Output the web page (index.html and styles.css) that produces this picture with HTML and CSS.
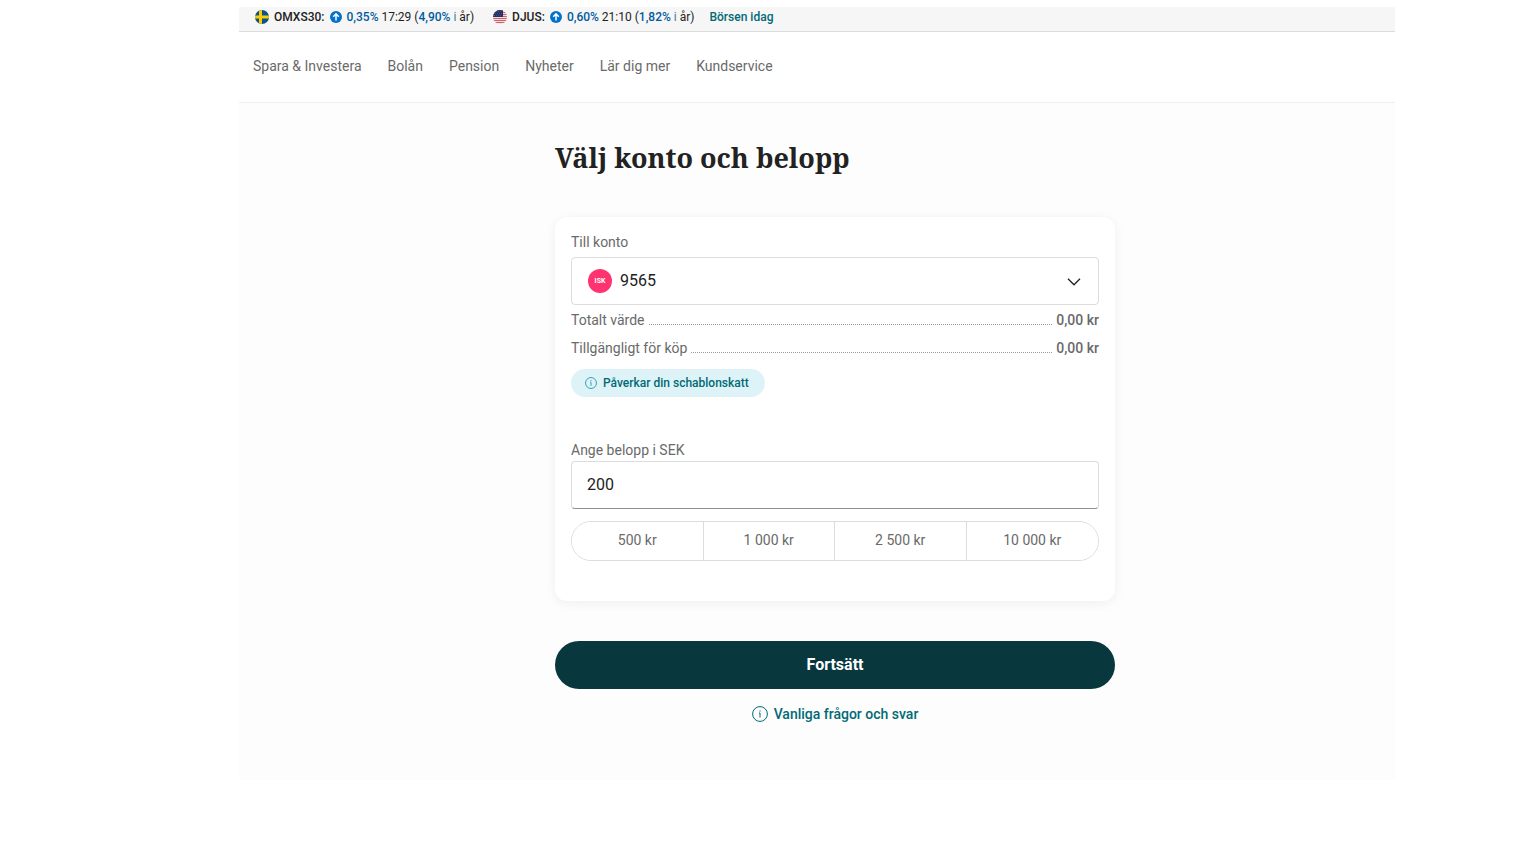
FILE: index.html
```
<!DOCTYPE html>
<html lang="sv">
<head>
<meta charset="utf-8">
<meta name="viewport" content="width=device-width, initial-scale=1">
<title>Välj konto och belopp</title>
<link rel="stylesheet" href="styles.css">
</head>
<body>
<div class="page">
  <div class="ticker">
    <div class="quote">
      <svg class="flag" viewBox="0 0 14 14" aria-hidden="true">
        <clipPath id="se"><circle cx="7" cy="7" r="7"/></clipPath>
        <g clip-path="url(#se)"><rect width="14" height="14" fill="#0a5290"/><path d="M4 0h3v14H4zM0 5.5h14v3H0z" fill="#fecb00"/></g>
      </svg>
      <strong>OMXS30:</strong>
      <svg class="trend" viewBox="0 0 12 12" aria-hidden="true"><circle cx="6" cy="6" r="6" fill="#0072cc"/><path d="M6 9.5V3M3.2 5.7L6 2.9l2.8 2.8" fill="none" stroke="#fff" stroke-width="1.5"/></svg>
      <span><span class="up">0,35%</span> 17:29 (<span class="up">4,90%</span> <span class="per">i</span> år)</span>
    </div>
    <div class="quote">
      <svg class="flag" viewBox="0 0 14 14" aria-hidden="true">
        <clipPath id="us"><circle cx="7" cy="7" r="7"/></clipPath>
        <g clip-path="url(#us)"><rect width="14" height="14" fill="#f0dde1"/><path d="M0 .5h14M0 2.5h14M0 4.5h14M0 6.5h14M0 8.5h14M0 10.5h14M0 12.5h14" stroke="#d4606c" stroke-width="1"/><rect width="10" height="7" fill="#1f3368"/><path d="M1 1.5h8M2 3.5h8M1 5.5h8" stroke="#5c6b98" stroke-width=".7" stroke-dasharray=".8 1.2"/></g>
      </svg>
      <strong>DJUS:</strong>
      <svg class="trend" viewBox="0 0 12 12" aria-hidden="true"><circle cx="6" cy="6" r="6" fill="#0072cc"/><path d="M6 9.5V3M3.2 5.7L6 2.9l2.8 2.8" fill="none" stroke="#fff" stroke-width="1.5"/></svg>
      <span><span class="up">0,60%</span> 21:10 (<span class="up">1,82%</span> <span class="per">i</span> år)</span>
    </div>
    <a class="ticker-link" href="#">Börsen idag</a>
  </div>

  <nav class="nav">
    <a href="#">Spara &amp; Investera</a>
    <a href="#">Bolån</a>
    <a href="#">Pension</a>
    <a href="#">Nyheter</a>
    <a href="#">Lär dig mer</a>
    <a href="#">Kundservice</a>
  </nav>

  <main class="main">
    <form class="form">
      <h1 class="title">Välj konto och belopp</h1>
      <div class="card">
        <label class="label account-label" for="account">Till konto</label>
        <div class="account">
          <select id="account" class="account-select"><option>9565</option></select>
          <span class="badge" aria-hidden="true">ISK</span>
          <svg class="chevron" viewBox="0 0 14 8" aria-hidden="true"><path d="M1 .8l6 6 6-6" fill="none" stroke="#222" stroke-width="1.3"/></svg>
        </div>
        <dl class="facts">
          <div class="fact"><dt>Totalt värde</dt><dd>0,00 kr</dd></div>
          <div class="fact"><dt>Tillgängligt för köp</dt><dd>0,00 kr</dd></div>
        </dl>
        <button type="button" class="pill">
          <svg class="pill-icon" viewBox="0 0 16 16" aria-hidden="true"><circle cx="8" cy="8" r="7.3"/><path d="M7 6.8h1v5M8 4v1.4"/></svg>
          Påverkar din schablonskatt
        </button>
        <label class="label amount-label" for="amount">Ange belopp i SEK</label>
        <input id="amount" class="amount" type="text" inputmode="numeric" value="200">
        <div class="presets">
          <button type="button">500 kr</button>
          <button type="button">1 000 kr</button>
          <button type="button">2 500 kr</button>
          <button type="button">10 000 kr</button>
        </div>
      </div>
      <button type="submit" class="submit">Fortsätt</button>
      <a class="faq" href="#">
        <svg class="faq-icon" viewBox="0 0 16 16" aria-hidden="true"><circle cx="8" cy="8" r="7.4"/><path d="M7 7h1v4.5M8 4.4v1.2"/></svg>
        Vanliga frågor och svar
      </a>
    </form>
  </main>
</div>
</body>
</html>
```
FILE: styles.css
```
* {
  box-sizing: border-box;
}

body {
  margin: 0;
  padding: 7px 141px 0 239px;
  background: #fff;
  color: #222;
  font-family: Roboto, "Liberation Sans", sans-serif;
  font-size: 14px;
  line-height: 20px;
}

a {
  text-decoration: none;
}

button,
input,
select {
  font: inherit;
}

.ticker {
  display: flex;
  align-items: center;
  padding: 0 16px 4px;
  border-bottom: 1px solid #dcdcdc;
  background: #f6f6f6;
  font-size: 12px;
}

.quote {
  display: flex;
  align-items: center;
  gap: 5px;
  margin-right: 19px;
}

.quote strong {
  font-weight: 500;
}

.flag {
  width: 14px;
  height: 14px;
}

.trend {
  width: 12px;
  height: 12px;
}

.up {
  color: #005b9e;
  font-weight: 500;
}

.per {
  color: #3c7ba8;
}

.ticker-link {
  margin-left: -4px;
  color: #006a75;
  font-weight: 500;
}

.nav {
  display: flex;
  gap: 26px;
  padding: 24px 14px 26px;
  border-bottom: 1px solid #efefef;
}

.nav a {
  color: #6a6a6a;
}

.main {
  padding: 35px 0 56px 36px;
  background: #fdfdfd;
}

.form {
  display: flex;
  flex-direction: column;
  max-width: 560px;
  margin: 0 auto;
}

.title {
  margin: 0 0 39px;
  font-family: "Roboto Slab", "Noto Serif", "DejaVu Serif", serif;
  font-size: 27px;
  font-weight: 700;
  line-height: 40px;
}

.card {
  display: flex;
  flex-direction: column;
  padding: 15px 16px 40px;
  border-radius: 12px;
  background: #fff;
  box-shadow: 0 2px 12px rgba(0, 0, 0, 0.06);
}

.label {
  color: #6a6a6a;
}

.account-label {
  margin-bottom: 5px;
}

.account {
  position: relative;
}

.account-select {
  display: block;
  width: 100%;
  height: 48px;
  padding: 0 48px;
  border: 1px solid #dcdcdc;
  border-radius: 4px;
  appearance: none;
  background: #fff;
  color: #222;
  font-size: 16px;
}

.badge {
  position: absolute;
  top: 12px;
  left: 17px;
  width: 24px;
  height: 24px;
  border-radius: 50%;
  background: #ff3370;
  color: #fff;
  font-size: 7px;
  font-weight: 700;
  line-height: 24px;
  text-align: center;
  pointer-events: none;
}

.chevron {
  position: absolute;
  top: 21px;
  right: 18px;
  width: 14px;
  height: 8px;
  pointer-events: none;
}

.facts {
  display: grid;
  gap: 8px;
  margin: 5px 0 11px;
  color: #6a6a6a;
}

.fact {
  display: flex;
  gap: 4px;
}

.fact::before {
  content: "";
  order: 1;
  flex: 1;
  height: 14px;
  border-bottom: 1px dotted #999;
}

.fact dd {
  order: 2;
  margin: 0;
  font-weight: 500;
}

.pill {
  display: flex;
  align-items: center;
  align-self: flex-start;
  gap: 6px;
  height: 28px;
  margin-bottom: 43px;
  padding: 0 16px 0 14px;
  border: 0;
  border-radius: 14px;
  background: #def3f7;
  color: #006a75;
  font-size: 12px;
  font-weight: 500;
}

.pill-icon {
  width: 12px;
  height: 12px;
  fill: none;
  stroke: #1f9bad;
  stroke-width: 1.2;
}

.amount-label {
  margin-bottom: 1px;
}

.amount {
  width: 100%;
  height: 48px;
  padding: 0 15px 2px;
  border: 1px solid #dcdcdc;
  border-bottom-color: #8f8f8f;
  border-radius: 4px;
  background: #fff;
  color: #222;
  font-size: 16px;
}

.presets {
  display: grid;
  grid-template-columns: repeat(4, 1fr);
  height: 40px;
  margin-top: 12px;
  border: 1px solid #dcdcdc;
  border-radius: 20px;
  overflow: hidden;
}

.presets button {
  padding: 0 0 2px;
  border: 0;
  background: #fff;
  color: #6a6a6a;
}

.presets button:not(:last-child) {
  border-right: 1px solid #dcdcdc;
}

.submit {
  height: 48px;
  margin-top: 40px;
  border: 0;
  border-radius: 24px;
  background: #08383e;
  color: #fff;
  font-size: 16px;
  font-weight: 700;
}

.faq {
  display: flex;
  align-items: center;
  align-self: center;
  gap: 6px;
  margin-top: 15px;
  color: #006a75;
  font-weight: 500;
}

.faq-icon {
  width: 16px;
  height: 16px;
  fill: none;
  stroke: #006a75;
  stroke-width: 1;
}
```
